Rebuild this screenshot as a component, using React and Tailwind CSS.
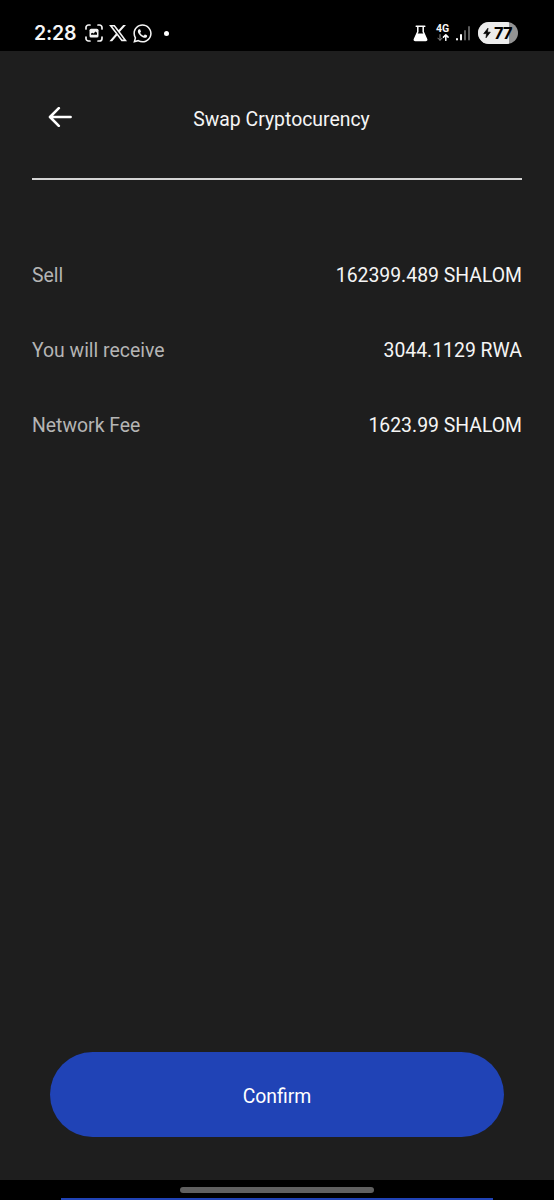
import { FaWhatsapp, FaXTwitter } from "react-icons/fa6";

const details = [
  { label: "Sell", value: "162399.489 SHALOM" },
  { label: "You will receive", value: "3044.1129 RWA" },
  { label: "Network Fee", value: "1623.99 SHALOM" },
];

function CaptureIcon() {
  return (
    <svg width="18" height="18" viewBox="0 0 18 18" fill="none">
      <path
        d="M1 5V3.5A2.5 2.5 0 0 1 3.5 1H5M13 1h1.5A2.5 2.5 0 0 1 17 3.5V5M17 13v1.5a2.5 2.5 0 0 1-2.5 2.5H13M5 17H3.5A2.5 2.5 0 0 1 1 14.5V13"
        stroke="#f2f2f2"
        strokeWidth="1.7"
        strokeLinecap="round"
      />
      <rect x="4.5" y="4.7" width="9" height="8.8" rx="1.6" fill="#f2f2f2" />
      <path d="M6 10.8V9.6l1.4-.8 1.2.6 1.8-1.9 1.6 1.2v2.1z" fill="#000" />
    </svg>
  );
}

function FlaskIcon() {
  return (
    <svg width="15" height="17" viewBox="0 0 15 17" fill="none">
      <path
        d="M3.2 1.2h8.6M4.8 1.5v5.2L1.4 14.2c-.3.8.1 1.4.9 1.4h10.4c.8 0 1.2-.6.9-1.4L10.2 6.7V1.5"
        stroke="#fff"
        strokeWidth="1.5"
        strokeLinecap="round"
        strokeLinejoin="round"
      />
      <path d="M3.8 8.6h7.4l2.6 6-.8 1H2l-.8-1z" fill="#fff" />
    </svg>
  );
}

function DataArrows() {
  return (
    <svg
      className="mt-[1px] shrink-0"
      width="12"
      height="7"
      viewBox="0 0 12 7"
      fill="none"
      strokeLinecap="round"
      strokeLinejoin="round"
    >
      <path d="M3 .6v5.6M.8 4.1L3 6.3l2.2-2.2" stroke="#8a8a8a" strokeWidth="1" />
      <path d="M8.8 6.3V.8M6.5 3.1L8.8.8l2.3 2.3" stroke="#fff" strokeWidth="1.5" />
    </svg>
  );
}

function SignalBars() {
  return (
    <svg width="15" height="15" viewBox="0 0 15 15">
      <rect x="0" y="12" width="2" height="2.5" rx="1" fill="#fff" />
      <rect x="4" y="8" width="2" height="6.5" rx="1" fill="#fff" />
      <rect x="8" y="4" width="2" height="10.5" rx="1" fill="#5c5c5c" />
      <rect x="12" y="0" width="2" height="14.5" rx="1" fill="#5c5c5c" />
    </svg>
  );
}

function Battery({ level }) {
  return (
    <div className="relative flex h-[22px] w-[40px] items-center overflow-hidden rounded-full bg-[#939393] pl-[5px]">
      <div
        className="absolute inset-y-0 left-0 bg-[#ececec]"
        style={{ width: `${level}%` }}
      />
      <svg className="relative" width="8" height="12" viewBox="0 0 9 12">
        <path
          d="M5.6.6L.8 6.7h3.2L3.4 11.4l4.8-6.3H5z"
          fill="#000"
          stroke="#000"
          strokeWidth="0.8"
          strokeLinejoin="round"
        />
      </svg>
      <span className="relative ml-[3px] text-[16.5px] leading-none font-bold tracking-[-0.8px] text-black">
        {level}
      </span>
    </div>
  );
}

function StatusBar() {
  return (
    <div className="flex h-[51px] items-center justify-between bg-black pt-[15px] pr-[36px] pb-0 pl-[34px] font-['Inter',sans-serif] text-[#f5f5f5]">
      <div className="flex items-center">
        <span className="w-[51px] text-[19.5px] leading-[20px] font-semibold tracking-[-0.2px]">
          2:28
        </span>
        <CaptureIcon />
        <FaXTwitter className="ml-[5px] size-[20px]" />
        <FaWhatsapp className="ml-[4px] size-[21px]" />
        <span className="ml-[11px] size-[5px] rounded-full bg-white" />
      </div>
      <div className="flex items-center">
        <FlaskIcon />
        <div className="ml-[8px] flex w-[13px] flex-col items-center">
          <span className="font-['Roboto',sans-serif] text-[10.5px] leading-[8px] font-bold">
            4G
          </span>
          <DataArrows />
        </div>
        <div className="ml-[7px]">
          <SignalBars />
        </div>
        <div className="ml-[7px]">
          <Battery level={77} />
        </div>
      </div>
    </div>
  );
}

function BackArrow() {
  return (
    <svg width="24" height="20" viewBox="0 0 24 20" fill="none">
      <path
        d="M10.8 1.2L2 10l8.8 8.8M2.2 10h20.4"
        stroke="#fff"
        strokeWidth="2.6"
        strokeLinecap="round"
        strokeLinejoin="round"
      />
    </svg>
  );
}

function App() {
  return (
    <div className="flex h-[1200px] w-[554px] flex-col overflow-hidden bg-[#1e1e1e] font-['Roboto',sans-serif] text-[19.4px] leading-6 text-[#f5f5f5]">
      <StatusBar />

      <main className="flex flex-1 flex-col px-8">
        <header className="grid h-[129px] grid-cols-[60px_1fr_51px] items-center border-b-2 border-[#d4d4d4]">
          <button className="pt-[5px] pl-[16px]" aria-label="Back">
            <BackArrow />
          </button>
          <h1 className="pt-[11px] text-center">Swap Cryptocurency</h1>
        </header>

        <dl className="mt-[84px] flex flex-col gap-[51px]">
          {details.map((item) => (
            <div key={item.label} className="flex justify-between">
              <dt className="text-[#b5b5b5]">{item.label}</dt>
              <dd>{item.value}</dd>
            </div>
          ))}
        </dl>

        <button className="mx-[18px] mt-auto mb-[43px] h-[85px] rounded-full bg-[#2043b6] pt-[4px] text-white">
          Confirm
        </button>
      </main>

      <footer className="flex h-[20px] flex-col items-center justify-between bg-black pt-[7px]">
        <div className="h-[6px] w-[194px] rounded-full bg-[#606060]" />
        <div className="h-[2px] w-[432px] bg-[#2043b6]" />
      </footer>
    </div>
  );
}

export default App;
